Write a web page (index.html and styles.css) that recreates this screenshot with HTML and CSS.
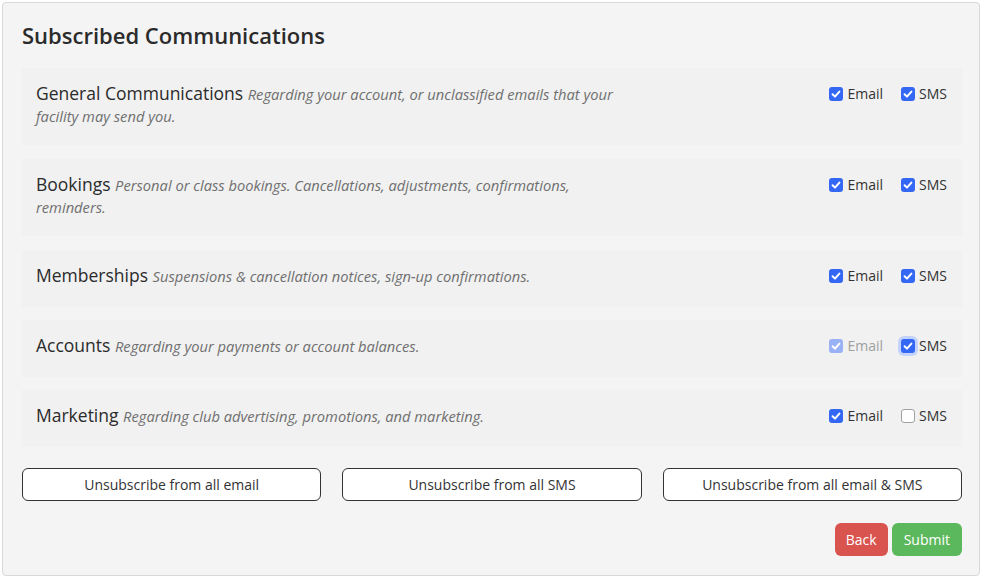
FILE: index.html
```html
<!DOCTYPE html>
<html>
<head>
<meta charset="utf-8">
<link rel="stylesheet" href="styles.css">
</head>
<body>
<div class="card">
  <h2 class="title">Subscribed Communications</h2>

  <div class="pref pref-tall">
    <div class="pref-text"><span class="pref-name">General Communications</span> <span class="pref-desc">Regarding your account, or unclassified emails that your facility may send you.</span></div>
    <div class="pref-opts">
      <label class="opt"><span class="box on"><svg viewBox="0 0 14 14" width="14" height="14"><polyline points="3.6,7.3 6,9.6 10.4,4.6" fill="none" stroke="#fff" stroke-width="2" stroke-linecap="round" stroke-linejoin="round"/></svg></span>Email</label>
      <label class="opt"><span class="box on"><svg viewBox="0 0 14 14" width="14" height="14"><polyline points="3.6,7.3 6,9.6 10.4,4.6" fill="none" stroke="#fff" stroke-width="2" stroke-linecap="round" stroke-linejoin="round"/></svg></span>SMS</label>
    </div>
  </div>

  <div class="pref pref-tall">
    <div class="pref-text"><span class="pref-name">Bookings</span> <span class="pref-desc">Personal or class bookings. Cancellations, adjustments, confirmations, reminders.</span></div>
    <div class="pref-opts">
      <label class="opt"><span class="box on"><svg viewBox="0 0 14 14" width="14" height="14"><polyline points="3.6,7.3 6,9.6 10.4,4.6" fill="none" stroke="#fff" stroke-width="2" stroke-linecap="round" stroke-linejoin="round"/></svg></span>Email</label>
      <label class="opt"><span class="box on"><svg viewBox="0 0 14 14" width="14" height="14"><polyline points="3.6,7.3 6,9.6 10.4,4.6" fill="none" stroke="#fff" stroke-width="2" stroke-linecap="round" stroke-linejoin="round"/></svg></span>SMS</label>
    </div>
  </div>

  <div class="pref">
    <div class="pref-text"><span class="pref-name">Memberships</span> <span class="pref-desc">Suspensions &amp; cancellation notices, sign-up confirmations.</span></div>
    <div class="pref-opts">
      <label class="opt"><span class="box on"><svg viewBox="0 0 14 14" width="14" height="14"><polyline points="3.6,7.3 6,9.6 10.4,4.6" fill="none" stroke="#fff" stroke-width="2" stroke-linecap="round" stroke-linejoin="round"/></svg></span>Email</label>
      <label class="opt"><span class="box on"><svg viewBox="0 0 14 14" width="14" height="14"><polyline points="3.6,7.3 6,9.6 10.4,4.6" fill="none" stroke="#fff" stroke-width="2" stroke-linecap="round" stroke-linejoin="round"/></svg></span>SMS</label>
    </div>
  </div>

  <div class="pref">
    <div class="pref-text"><span class="pref-name">Accounts</span> <span class="pref-desc">Regarding your payments or account balances.</span></div>
    <div class="pref-opts">
      <label class="opt disabled"><span class="box on"><svg viewBox="0 0 14 14" width="14" height="14"><polyline points="3.6,7.3 6,9.6 10.4,4.6" fill="none" stroke="#fff" stroke-width="2" stroke-linecap="round" stroke-linejoin="round"/></svg></span>Email</label>
      <label class="opt"><span class="box on focus"><svg viewBox="0 0 14 14" width="14" height="14"><polyline points="3.6,7.3 6,9.6 10.4,4.6" fill="none" stroke="#fff" stroke-width="2" stroke-linecap="round" stroke-linejoin="round"/></svg></span>SMS</label>
    </div>
  </div>

  <div class="pref">
    <div class="pref-text"><span class="pref-name">Marketing</span> <span class="pref-desc">Regarding club advertising, promotions, and marketing.</span></div>
    <div class="pref-opts">
      <label class="opt"><span class="box on"><svg viewBox="0 0 14 14" width="14" height="14"><polyline points="3.6,7.3 6,9.6 10.4,4.6" fill="none" stroke="#fff" stroke-width="2" stroke-linecap="round" stroke-linejoin="round"/></svg></span>Email</label>
      <label class="opt"><span class="box off"></span>SMS</label>
    </div>
  </div>

  <div class="unsub-row">
    <button class="btn-outline">Unsubscribe from all email</button>
    <button class="btn-outline">Unsubscribe from all SMS</button>
    <button class="btn-outline">Unsubscribe from all email &amp; SMS</button>
  </div>

  <div class="actions">
    <button class="btn btn-back">Back</button>
    <button class="btn btn-submit">Submit</button>
  </div>
</div>
</body>
</html>
```

FILE: styles.css
```css
* { box-sizing: border-box; }

html, body {
  margin: 0;
  padding: 0;
  background: #ffffff;
}

body {
  padding: 2px;
  font-family: "Open Sans", "Noto Sans", sans-serif;
  color: #333333;
}

.card {
  background: #f4f4f4;
  border: 1px solid #d8d8d8;
  border-radius: 4px;
  padding: 18px 17px 19px 19px;
  min-height: 573px;
}

.title {
  margin: 0 0 19px 0;
  font-size: 22px;
  line-height: 28px;
  font-weight: 600;
  color: #2b2b2b;
}

.pref {
  display: flex;
  justify-content: space-between;
  align-items: flex-start;
  background: #f1f1f1;
  padding: 14px 15px 19px 14px;
  margin-bottom: 13px;
  min-height: 57px;
}

.pref-tall {
  margin-bottom: 14px;
}

.pref-text {
  width: 600px;
  font-size: 17.5px;
  line-height: 22px;
}

.pref-name {
  font-size: 17.5px;
  line-height: 22px;
  color: #2b2b2b;
}

.pref-desc {
  font-size: 14.7px;
  line-height: 16px;
  font-style: italic;
  color: #6f6f6f;
}

.pref-opts {
  display: flex;
  gap: 18px;
  padding-top: 4px;
  margin-left: 2px;
}

.opt {
  display: flex;
  align-items: center;
  gap: 4px;
  font-size: 14px;
  line-height: 16px;
  color: #333333;
}

.opt.disabled {
  color: #a0a0a0;
}

.box {
  display: inline-flex;
  width: 14px;
  height: 14px;
  border-radius: 3px;
}

.box svg { display: block; }

.box.on {
  background: #3367f4;
}

.opt.disabled .box.on {
  background: #99b2f6;
}

.box.focus {
  box-shadow: 0 0 0 3px #c3d3fb;
}

.box.off {
  background: #ffffff;
  border: 1px solid #a0a0a0;
}

.unsub-row {
  display: grid;
  grid-template-columns: 1fr 1fr 1fr;
  gap: 21px;
  margin-top: 21px;
}

.btn-outline {
  font-family: "Open Sans", "Noto Sans", sans-serif;
  font-size: 14px;
  color: #333333;
  background: #ffffff;
  border: 1px solid #333333;
  border-radius: 6px;
  height: 33px;
  padding: 0;
}

.actions {
  display: flex;
  justify-content: flex-end;
  gap: 4px;
  margin-top: 22px;
}

.btn {
  font-family: "Open Sans", "Noto Sans", sans-serif;
  font-size: 14px;
  color: #ffffff;
  border: none;
  border-radius: 6px;
  height: 33px;
  padding: 0 11px;
}

.btn-submit { padding: 0 12px; }

.btn-back { background: #d9534f; }
.btn-submit { background: #5cb85c; }
```
